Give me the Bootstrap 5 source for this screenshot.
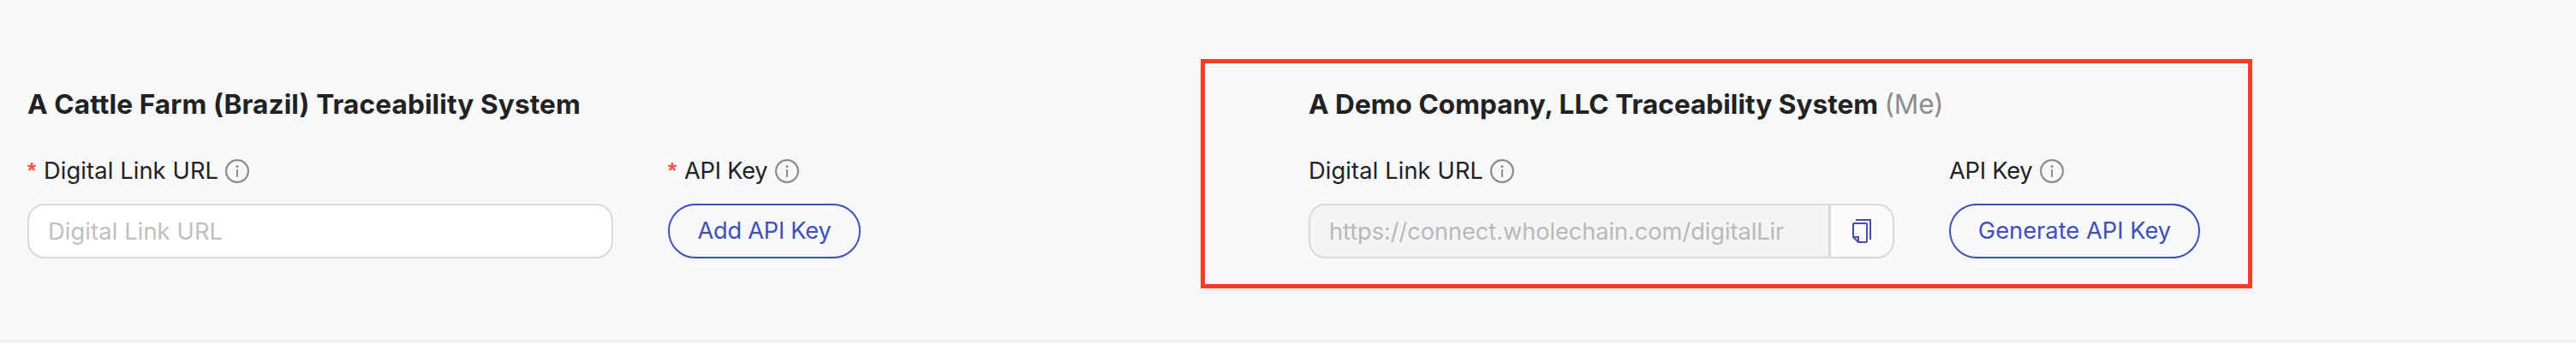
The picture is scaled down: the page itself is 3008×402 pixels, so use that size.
<!DOCTYPE html>
<html lang="en">
<head>
<meta charset="utf-8">
<title>Traceability Systems</title>
<link href="https://cdn.jsdelivr.net/npm/bootstrap@5.3.0/dist/css/bootstrap.min.css" rel="stylesheet">
<style>
  body { background: #fafafa; font-family: Inter, "Liberation Sans", sans-serif; font-size: 27.3px; color: #222; overflow: hidden; }
  .systems { height: 400px; background: #f7f8fa; border-bottom: 2px solid #eeeff1; padding: 98px 0 0 32px; display: grid; grid-template-columns: 1432px 1432px; gap: 64px; align-items: start; }
  .system-title { font-size: 31.6px; font-weight: 700; line-height: 48px; margin: 0 0 34px; white-space: nowrap; }
  .title-farm { letter-spacing: .1px; }
  .title-demo { letter-spacing: 0; }
  .me { font-weight: 400; color: #8c8c8c; letter-spacing: -.2px; }
  .fields { display: grid; grid-template-columns: 684px 684px; gap: 64px; }
  .field-label { height: 40px; line-height: 40px; margin-bottom: 18px; white-space: nowrap; }
  .t-link { letter-spacing: .1px; }
  .t-api { letter-spacing: -.28px; }
  .required { font-family: "Liberation Sans", sans-serif; font-size: 26px; font-weight: 700; color: #ff5350; width: 19px; height: 40px; line-height: 38px; }
  .info { width: 28px; height: 28px; color: #8c8c8c; margin-left: 8px; }
  .t-api + .info { margin-left: 9px; }
  .field-input, .field-input:disabled { height: 64px; border: 2px solid #d9d9d9; border-radius: 20px; padding: 0 22px; font-size: inherit; color: #bababa; background: #fff; line-height: 60px; }
  .field-input::placeholder { color: #bfbfbf; opacity: 1; letter-spacing: .1px; }
  .field-input:disabled { background: #f4f4f4; letter-spacing: -.1px; -webkit-text-fill-color: #b9b9b9; }
  .copy { width: 76px; border: 2px solid #d9d9d9; border-radius: 20px; background: #fafafa; padding: 0; }
  .key-btn { height: 64px; border: 2px solid #414fb5; border-radius: 32px; color: #414fb5; font-size: inherit; padding: 0; line-height: 60px; box-shadow: 0 4px 0 rgba(0,0,0,.015); }
  .add { width: 225px; letter-spacing: -.3px; }
  .generate { width: 293px; }
  .highlight { left: 1402px; top: 69px; width: 1228px; height: 268px; border: 5px solid #ed4127; pointer-events: none; }
</style>
<script src="https://cdn.jsdelivr.net/npm/bootstrap@5.3.0/dist/js/bootstrap.bundle.min.js"></script>
</head>
<body>
<svg class="d-none">
  <symbol id="info" viewBox="0 0 28 28">
    <circle cx="14" cy="14" r="12.9" fill="none" stroke="currentColor" stroke-width="2.2"/>
    <circle cx="14" cy="8.5" r="1.5" fill="currentColor"/>
    <path d="M14 12v9" stroke="currentColor" stroke-width="2"/>
  </symbol>
</svg>
<main class="systems position-relative">
  <section>
    <h2 class="system-title title-farm">A Cattle Farm (Brazil) Traceability System</h2>
    <div class="fields">
      <div>
        <label class="field-label d-flex align-items-center" for="farm-link"><span class="required">*</span><span class="t-link">Digital Link URL</span><svg class="info"><use href="#info"/></svg></label>
        <input id="farm-link" class="form-control field-input" placeholder="Digital Link URL">
      </div>
      <div>
        <div class="field-label d-flex align-items-center"><span class="required">*</span><span class="t-api">API Key</span><svg class="info"><use href="#info"/></svg></div>
        <button type="button" class="btn key-btn add">Add API Key</button>
      </div>
    </div>
  </section>
  <section>
    <h2 class="system-title title-demo">A Demo Company, LLC Traceability System <span class="me">(Me)</span></h2>
    <div class="fields">
      <div>
        <label class="field-label d-flex align-items-center" for="demo-link"><span class="t-link">Digital Link URL</span><svg class="info"><use href="#info"/></svg></label>
        <div class="input-group flex-nowrap">
          <input id="demo-link" class="form-control field-input" value="https://connect.wholechain.com/digitalLir" disabled>
          <button type="button" class="btn copy d-flex align-items-center justify-content-center" aria-label="Copy">
            <svg width="22" height="28" viewBox="0 0 22 28" fill="none" stroke="#414fb5" stroke-width="2">
              <path d="M4 1H21V24"/>
              <path d="M1 6Q1 5 2 5H16Q17 5 17 6V26Q17 27 16 27H7L1 21ZM1 21H7V27"/>
            </svg>
          </button>
        </div>
      </div>
      <div>
        <div class="field-label d-flex align-items-center"><span class="t-api">API Key</span><svg class="info"><use href="#info"/></svg></div>
        <button type="button" class="btn key-btn generate">Generate API Key</button>
      </div>
    </div>
  </section>
  <div class="highlight position-absolute"></div>
</main>
</body>
</html>
